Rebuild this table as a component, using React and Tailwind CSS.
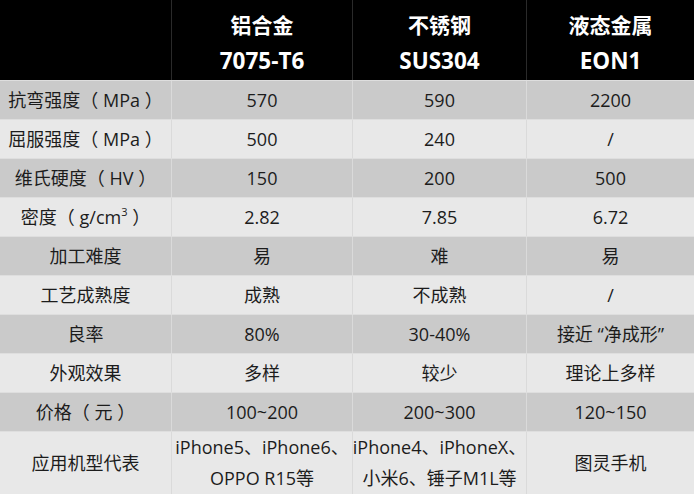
const columns = [
  ['铝合金', '7075-T6'],
  ['不锈钢', 'SUS304'],
  ['液态金属', 'EON1'],
];

const rows = [
  ['抗弯强度（ MPa ）', '570', '590', '2200'],
  ['屈服强度（ MPa ）', '500', '240', '/'],
  ['维氏硬度（ HV ）', '150', '200', '500'],
  [<>密度（ g/cm<sup className="text-[11px] align-[6px]">3</sup> ）</>, '2.82', '7.85', '6.72'],
  ['加工难度', '易', '难', '易'],
  ['工艺成熟度', '成熟', '不成熟', '/'],
  ['良率', '80%', '30-40%', '接近 “净成形”'],
  ['外观效果', '多样', '较少', '理论上多样'],
  ['价格（ 元 ）', '100~200', '200~300', '120~150'],
];

const grid = 'grid grid-cols-[172px_181px_174px_167px]';

export default function App() {
  return (
    <div
      className="w-[694px] h-[500px] bg-white text-[#1c1c1c] [text-spacing-trim:space-all]"
      style={{ fontFamily: '"Open Sans", "Noto Sans CJK SC", sans-serif' }}
    >
      <div className={`${grid} h-[80px] bg-black text-white font-bold`}>
        <div className="border-r border-[#2a2a2a]" />
        {columns.map(([a, b], i) => (
          <div
            key={a}
            className={`flex flex-col items-center justify-center pt-[6px] ${i < 2 ? 'border-r border-[#2a2a2a]' : ''}`}
          >
            <span className="text-[21px] leading-[36px]">{a}</span>
            <span className="text-[22.5px] leading-[36px]">{b}</span>
          </div>
        ))}
      </div>

      {rows.map((r, ri) => (
        <div
          key={ri}
          className={`${grid} h-[39px] border-t border-[#dedede] text-[18px] ${ri % 2 === 0 ? 'bg-[#cacaca]' : 'bg-[#e8e8e8]'}`}
        >
          {r.map((c, ci) => (
            <div
              key={ci}
              className={`flex items-center justify-center whitespace-pre ${ci < 3 ? 'border-r border-[#dadada]' : ''}`}
            >
              {c}
            </div>
          ))}
        </div>
      ))}

      <div className={`${grid} h-[63px] border-t border-[#dedede] text-[18px] bg-[#e8e8e8]`}>
        <div className="flex items-center justify-center border-r border-[#dadada]">应用机型代表</div>
        <div className="flex flex-col items-center justify-center leading-[31px] whitespace-nowrap border-r border-[#dadada]">
          <span>iPhone5、iPhone6、</span>
          <span>OPPO R15等</span>
        </div>
        <div className="flex flex-col items-center justify-center leading-[31px] whitespace-nowrap border-r border-[#dadada]">
          <span>iPhone4、iPhoneX、</span>
          <span>小米6、锤子M1L等</span>
        </div>
        <div className="flex items-center justify-center">图灵手机</div>
      </div>
    </div>
  );
}
